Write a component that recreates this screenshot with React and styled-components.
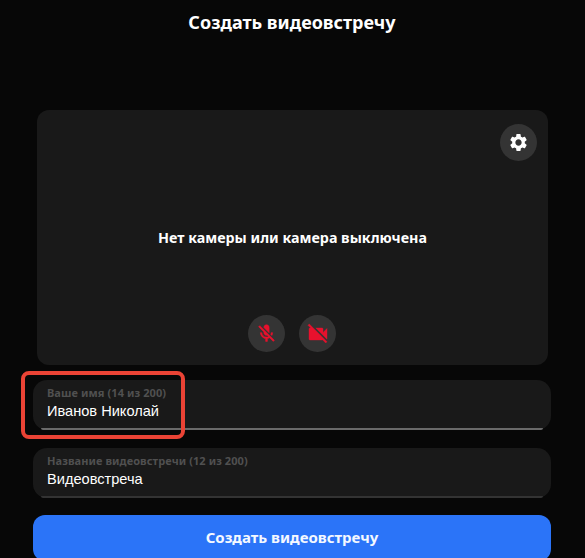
import React from "react";
import styled, { createGlobalStyle } from "styled-components";
import { MdSettings } from "react-icons/md";

const Global = createGlobalStyle`
  html, body { margin: 0; padding: 0; background: #070707; height: 100%; overflow: hidden; }
  * { box-sizing: border-box; }
`;
const Page = styled.div`
  position: relative;
  width: 585px;
  height: 558px;
  overflow: hidden;
  padding: 0 34px 0 33px;
  display: flex;
  flex-direction: column;
  font-family: "Noto Sans", sans-serif;
  & > * { flex-shrink: 0; }
`;
const Title = styled.h1`
  margin: 0;
  height: 110px;
  padding-top: 9px;
  text-align: center;
  color: #fff;
  font-size: 18px;
  line-height: 26px;
  font-weight: 700;
`;
const Preview = styled.div`
  position: relative;
  margin: 0 3px 0 4px;
  height: 255px;
  border-radius: 12px;
  background: #191919;
  display: flex;
  align-items: center;
  justify-content: center;
  color: #fff;
  font-size: 14.3px;
  font-weight: 700;
`;
const RoundButton = styled.button`
  width: 37px;
  height: 37px;
  padding: 0;
  border: 0;
  border-radius: 50%;
  background: #343434;
  color: ${(p) => p.$color};
  display: flex;
  align-items: center;
  justify-content: center;
`;
const Settings = styled.div`
  position: absolute;
  top: 14px;
  right: 11px;
`;
const Controls = styled.div`
  position: absolute;
  left: 0;
  right: 1px;
  bottom: 13px;
  display: flex;
  justify-content: center;
  gap: 14px;
`;
const Icon = styled.svg`
  width: ${(p) => p.$size}px;
  height: ${(p) => p.$size}px;
  fill: currentColor;
  stroke: currentColor;
  stroke-width: ${(p) => p.$stroke};
`;
const Field = styled.div`
  position: relative;
  height: 50px;
  margin-top: ${(p) => p.$top}px;
  padding: 5px 14px 0;
  border-radius: 14px;
  background: #191919;
  &::after {
    content: "";
    position: absolute;
    left: 8px;
    right: 8px;
    bottom: 0;
    height: 2px;
    border-radius: 0 0 8px 8px;
    background: ${(p) => p.$line};
  }
`;
const Label = styled.div`
  color: #505050;
  font-size: 11px;
  line-height: 15px;
  font-weight: 700;
  letter-spacing: 0.08px;
`;
const Value = styled.div`
  color: #fff;
  font-family: "Liberation Sans", sans-serif;
  font-size: 14.6px;
  line-height: 20px;
  margin-top: 1px;
`;
const Submit = styled.button`
  height: 46px;
  margin-top: 17px;
  border: 0;
  border-radius: 12px;
  background: #2b74f8;
  color: #f4f8ff;
  font-family: "Noto Sans", sans-serif;
  font-size: 15px;
  font-weight: 700;
  padding: 0 0 2px;
`;
const Highlight = styled.div`
  position: absolute;
  left: 21px;
  top: 371px;
  width: 164px;
  height: 68px;
  border: 4px solid #ea4335;
  border-radius: 8px;
`;

export default function App() {
  return (
    <Page>
      <Global />
      <Title>Создать видеовстречу</Title>
      <Preview>
        Нет камеры или камера выключена
        <Settings>
          <RoundButton $color="#fff"><MdSettings size={21} /></RoundButton>
        </Settings>
        <Controls>
          <RoundButton $color="#e8112d">
            <Icon viewBox="0 0 24 24" $size={21} $stroke={0.6}>
              <path d="M19 11h-1.7c0 .74-.16 1.43-.43 2.05l1.23 1.23c.56-.98.9-2.09.9-3.28zm-4.02.17c0-.06.02-.11.02-.17V5c0-1.66-1.34-3-3-3S9 3.34 9 5v.18l5.98 5.99zM4.27 3L3 4.27l6.01 6.01V11c0 1.66 1.33 3 2.99 3 .22 0 .44-.03.65-.08l1.66 1.66c-.71.33-1.5.52-2.31.52-2.76 0-5.3-2.1-5.3-5.1H5c0 3.41 2.72 6.23 6 6.72V21h2v-3.28c.91-.13 1.77-.45 2.54-.9L19.73 21 21 19.73 4.27 3z" />
            </Icon>
          </RoundButton>
          <RoundButton $color="#e8112d">
            <Icon viewBox="0 0 24 24" $size={24} $stroke={0.4}>
              <path d="M21 6.5l-4 4V7c0-.55-.45-1-1-1H9.82L21 17.18V6.5zM3.27 2L2 3.27 4.73 6H4c-.55 0-1 .45-1 1v10c0 .55.45 1 1 1h12c.21 0 .39-.08.54-.18L19.73 21 21 19.73 3.27 2z" />
            </Icon>
          </RoundButton>
        </Controls>
      </Preview>
      <Field $top={15} $line="#6a6a6a">
        <Label>Ваше имя (14 из 200)</Label>
        <Value>Иванов Николай</Value>
      </Field>
      <Field $top={18} $line="#333">
        <Label>Название видеовстречи (12 из 200)</Label>
        <Value>Видеовстреча</Value>
      </Field>
      <Submit>Создать видеовстречу</Submit>
      <Highlight />
    </Page>
  );
}
